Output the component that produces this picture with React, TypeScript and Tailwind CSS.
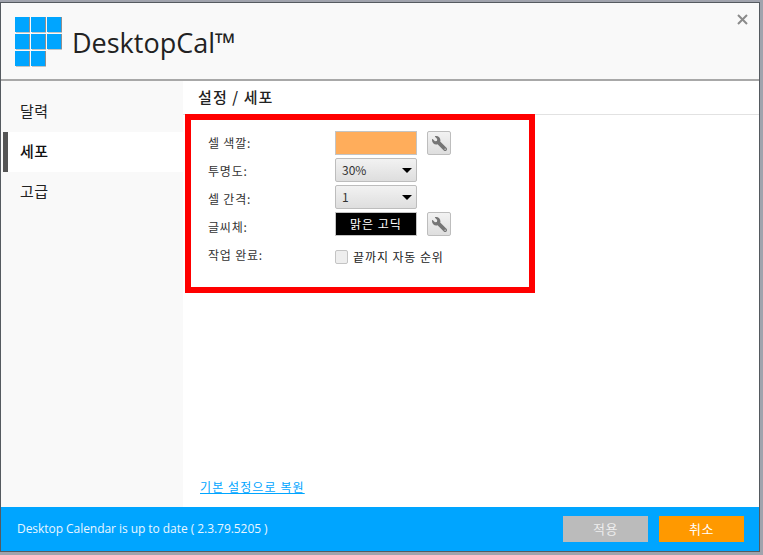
import React from "react";
import { FaWrench } from "react-icons/fa";

const font = { fontFamily: '"Noto Sans CJK KR", "Noto Sans", sans-serif' };

function Wrench() {
  return (
    <button className="w-[24px] h-[24px] rounded-[2px] border border-[#bdbdbd] bg-gradient-to-b from-[#f2f2f2] to-[#dedede] flex items-center justify-center">
      <FaWrench className="-scale-x-100 text-[#757575]" size={15} />
    </button>
  );
}

function Select({ value }: { value: string }) {
  return (
    <div className="w-[82px] h-[24px] rounded-[2px] border border-[#bdbdbd] bg-gradient-to-b from-[#f2f2f2] to-[#dedede] flex items-center justify-between pl-[6px] pr-[3px] text-[12px] text-[#333] leading-none">
      <span>{value}</span>
      <span className="w-0 h-0 mr-[1px] border-l-[5px] border-r-[5px] border-t-[5px] border-l-transparent border-r-transparent border-t-black" />
    </div>
  );
}

function Label({ children }: { children: React.ReactNode }) {
  return <div className="h-[28px] flex items-center text-[12px] leading-none text-[#333] tracking-[0.8px]">{children}</div>;
}

function Logo() {
  const cells = [1, 1, 1, 1, 1, 1, 1, 1, 0];
  return (
    <div className="grid grid-cols-3 gap-x-[2px] gap-y-[2px] w-[46px]">
      {cells.map((c, i) => (
        <div key={i} className={c ? "w-[14px] h-[15px] bg-[#00a5ff] shadow-[1px_0_0_#8f8f8f,1px_1px_0_#c4c4c4]" : "w-[14px] h-[15px]"} />
      ))}
    </div>
  );
}

export default function App() {
  return (
    <div className="w-[763px] h-[555px] bg-[#a0a3ad] pt-[2px] overflow-hidden relative" style={font}>
      <div className="w-[760px] h-[550px] border border-[#555a60] bg-white flex flex-col relative">
        <header className="h-[78px] shrink-0 bg-[#f9f9f9] border-b-2 border-b-[#a8a8a8] flex items-center pl-[14px] relative">
          <Logo />
          <div className="ml-[11px] mt-[2px] text-[27px] leading-none text-[#222]" style={{ fontFamily: '"Open Sans", sans-serif' }}>
            DesktopCal™
          </div>
          <svg className="absolute right-[11px] top-[11px]" width="11" height="11" viewBox="0 0 11 11">
            <path d="M1 1 L10 10 M10 1 L1 10" stroke="#8b8b8b" strokeWidth="2" />
          </svg>
        </header>
        <div className="flex flex-1 min-h-0">
          <aside className="w-[182px] shrink-0 bg-[#f9f9f9] pt-[11px] text-[15px] text-[#222] tracking-[0.4px]">
            <div className="h-[40px] flex items-center pl-[19px] pb-[1px]">달력</div>
            <div className="h-[40px] flex items-center ml-[2px] bg-white font-medium text-[#111] pb-[1px]">
              <span className="w-[5px] h-[40px] -mb-[1px] bg-[#555] mr-[12px]" />
              세포
            </div>
            <div className="h-[40px] flex items-center pl-[19px] pb-[1px]">고급</div>
          </aside>
          <main className="flex-1 flex flex-col">
            <div className="h-[34px] shrink-0 border-b border-[#e2e2e2] flex items-center pl-[15px] text-[15px] font-medium text-[#222] tracking-[1.1px]">
              설정 / 세포
            </div>
            <div className="flex-1 pl-[25px] pt-[14px] flex flex-col">
              <div className="flex">
                <div className="w-[127px] flex flex-col">
                  <Label>셀 색깔:</Label>
                  <Label>투명도:</Label>
                  <Label>셀 간격:</Label>
                  <Label>글씨체:</Label>
                  <Label>작업 완료:</Label>
                </div>
                <div className="flex flex-col gap-[3px] pt-[2px]">
                  <div className="flex items-center">
                    <div className="w-[82px] h-[24px] border border-[#c4c4c4] bg-[#ffad5b]" />
                    <div className="ml-[10px]"><Wrench /></div>
                  </div>
                  <Select value="30%" />
                  <Select value="1" />
                  <div className="flex items-center">
                    <div className="w-[82px] h-[24px] border border-[#c4c4c4] bg-black text-white text-[12px] flex items-center justify-center tracking-[1px]">맑은 고딕</div>
                    <div className="ml-[10px]"><Wrench /></div>
                  </div>
                  <div className="flex items-center mt-[11px] h-[14px]">
                    <span className="w-[13px] h-[14px] rounded-[2px] border border-[#c4c4c4] bg-[#eeeeee] mr-[5px]" />
                    <span className="text-[12px] text-[#222] tracking-[0.9px]">끝까지 자동 순위</span>
                  </div>
                </div>
              </div>
              <div className="mt-auto mb-[11px] -ml-[8px] text-[12px] text-[#00a5ff] underline tracking-[1.1px]">기본 설정으로 복원</div>
            </div>
          </main>
        </div>
        <footer className="h-[44px] shrink-0 bg-[#00a5ff] flex items-center pl-[16px] pr-[15px] text-white">
          <span className="text-[12px] text-[#e8f6ff] tracking-[-0.05px]" style={{ fontFamily: '"Open Sans", sans-serif' }}>Desktop Calendar is up to date ( 2.3.79.5205 )</span>
          <div className="ml-auto flex gap-[11px]">
            <div className="w-[85px] h-[26px] bg-[#bbbbbb] flex items-center justify-center text-[13px] tracking-[0.5px] text-[#eeeeee]">적용</div>
            <div className="w-[85px] h-[26px] bg-[#ff9900] flex items-center justify-center text-[13px] tracking-[0.5px]">취소</div>
          </div>
        </footer>
      </div>
      <div className="absolute left-[185px] top-[114px] w-[350px] h-[179px] border-[6px] border-[#ff0000]" />
    </div>
  );
}
